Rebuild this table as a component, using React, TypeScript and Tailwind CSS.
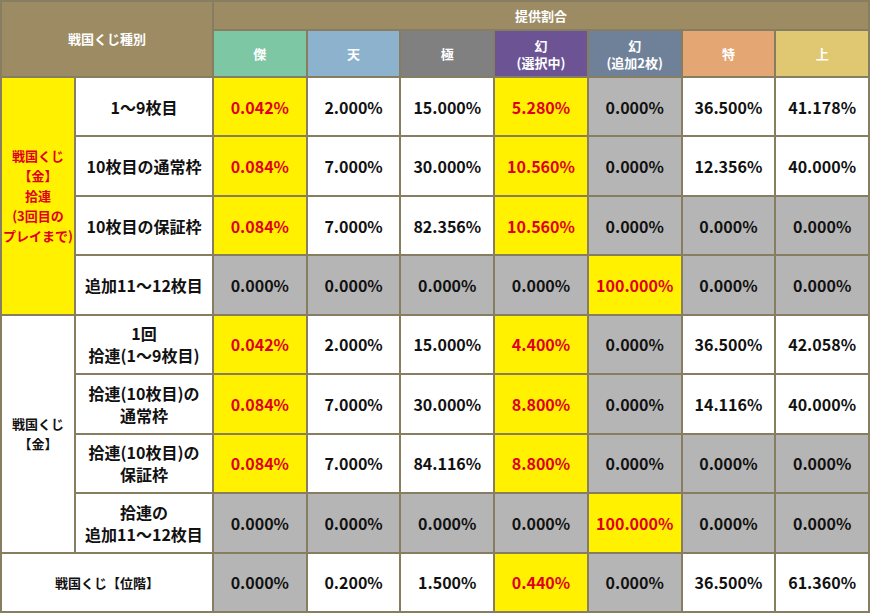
import React from "react";

type Kind = "Y" | "W" | "G";
type Cell = [string, Kind];

const Y = (v: string): Cell => [v, "Y"];
const W = (v: string): Cell => [v, "W"];
const G = (v: string): Cell => [v, "G"];

const rows: { label: string[]; cells: Cell[] }[] = [
  { label: ["1〜9枚目"], cells: [Y("0.042%"), W("2.000%"), W("15.000%"), Y("5.280%"), G("0.000%"), W("36.500%"), W("41.178%")] },
  { label: ["10枚目の通常枠"], cells: [Y("0.084%"), W("7.000%"), W("30.000%"), Y("10.560%"), G("0.000%"), W("12.356%"), W("40.000%")] },
  { label: ["10枚目の保証枠"], cells: [Y("0.084%"), W("7.000%"), W("82.356%"), Y("10.560%"), G("0.000%"), G("0.000%"), G("0.000%")] },
  { label: ["追加11〜12枚目"], cells: [G("0.000%"), G("0.000%"), G("0.000%"), G("0.000%"), Y("100.000%"), G("0.000%"), G("0.000%")] },
  { label: ["1回", "拾連(1〜9枚目)"], cells: [Y("0.042%"), W("2.000%"), W("15.000%"), Y("4.400%"), G("0.000%"), W("36.500%"), W("42.058%")] },
  { label: ["拾連(10枚目)の", "通常枠"], cells: [Y("0.084%"), W("7.000%"), W("30.000%"), Y("8.800%"), G("0.000%"), W("14.116%"), W("40.000%")] },
  { label: ["拾連(10枚目)の", "保証枠"], cells: [Y("0.084%"), W("7.000%"), W("84.116%"), Y("8.800%"), G("0.000%"), G("0.000%"), G("0.000%")] },
  { label: ["拾連の", "追加11〜12枚目"], cells: [G("0.000%"), G("0.000%"), G("0.000%"), G("0.000%"), Y("100.000%"), G("0.000%"), G("0.000%")] },
];

const lastRow: Cell[] = [G("0.000%"), W("0.200%"), W("1.500%"), Y("0.440%"), G("0.000%"), W("36.500%"), W("61.360%")];

function ValueCell({ cell }: { cell: Cell }) {
  const [v, k] = cell;
  const cls =
    k === "Y"
      ? "bg-[#fff100] text-[#e0001b]"
      : k === "G"
      ? "bg-[#b5b5b5] text-[#111111]"
      : "bg-white text-[#111111]";
  return (
    <div className={`flex items-center justify-center text-[16px] font-bold ${cls}`}>{v}</div>
  );
}

const heads: { lines: string[]; bg: string }[] = [
  { lines: ["傑"], bg: "bg-[#7ec7a4]" },
  { lines: ["天"], bg: "bg-[#8cb2cd]" },
  { lines: ["極"], bg: "bg-[#808080]" },
  { lines: ["幻", "(選択中)"], bg: "bg-[#6c5494]" },
  { lines: ["幻", "(追加2枚)"], bg: "bg-[#6f8199]" },
  { lines: ["特"], bg: "bg-[#e4a672]" },
  { lines: ["上"], bg: "bg-[#e0c872]" },
];

export default function App() {
  return (
    <div
      className="grid w-[870px] h-[613px] bg-[#877e62] p-[2px] gap-[2px] grid-cols-[72px_136px_repeat(7,1fr)] grid-rows-[27px_45px_repeat(9,1fr)] text-[#111111]"
      style={{ fontFamily: '"Noto Sans CJK JP", "Noto Sans", sans-serif' }}
    >
      <div className="col-span-2 row-span-2 bg-[#9c8b63] flex items-center justify-center text-white text-[13px] font-bold">
        戦国くじ種別
      </div>
      <div className="col-span-7 bg-[#9c8b63] flex items-center justify-center text-white text-[13px] font-bold">
        提供割合
      </div>
      {heads.map((h, i) => (
        <div
          key={i}
          className={`${h.bg} flex flex-col items-center justify-center text-white text-[13px] font-bold leading-[17px]`}
        >
          {h.lines.map((l, j) => (
            <span key={j}>{l}</span>
          ))}
        </div>
      ))}

      {rows.map((r, i) => (
        <React.Fragment key={i}>
          {i === 0 && (
            <div className="row-span-4 bg-[#fff100] text-[#e0001b] flex flex-col items-center justify-center text-[13px] font-bold leading-[20px]">
              <span>戦国くじ</span>
              <span>【金】</span>
              <span>拾連</span>
              <span>(3回目の</span>
              <span>プレイまで)</span>
            </div>
          )}
          {i === 4 && (
            <div className="row-span-4 bg-white flex flex-col items-center justify-center text-[13px] font-bold leading-[20px]">
              <span>戦国くじ</span>
              <span>【金】</span>
            </div>
          )}
          <div className="bg-white flex flex-col items-center justify-center text-[16px] font-bold leading-[22px]">
            {r.label.map((l, j) => (
              <span key={j}>{l}</span>
            ))}
          </div>
          {r.cells.map((c, j) => (
            <ValueCell key={j} cell={c} />
          ))}
        </React.Fragment>
      ))}

      <div className="col-span-2 bg-white flex items-center justify-center text-[13px] font-bold">
        戦国くじ【位階】
      </div>
      {lastRow.map((c, j) => (
        <ValueCell key={j} cell={c} />
      ))}
    </div>
  );
}
